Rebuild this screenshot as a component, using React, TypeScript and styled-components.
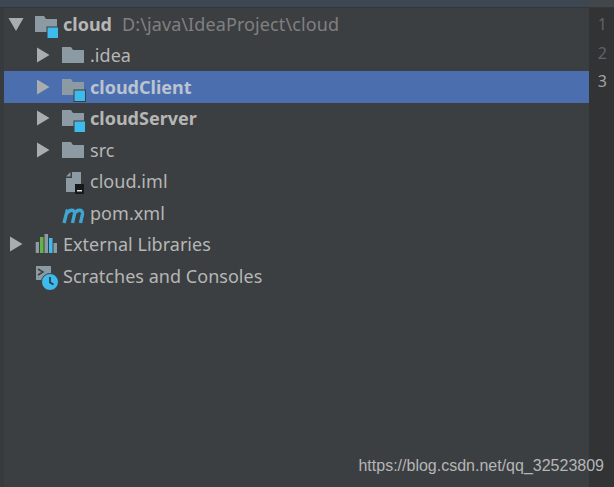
import styled, { createGlobalStyle } from 'styled-components';

const GlobalStyle = createGlobalStyle`
  html, body { margin: 0; padding: 0; background: #3c3f41; overflow: hidden; }
`;

const Window = styled.div`
  position: relative;
  display: flex;
  flex-direction: column;
  width: 614px;
  height: 487px;
  background: #3c3f41;
  font-family: "Noto Sans", sans-serif;
  overflow: hidden;
`;

const TopBar = styled.div`
  display: flex;
  flex: 0 0 7px;
  background: #3d4752;
  border-bottom: 1px solid #33363a;
  box-sizing: content-box;
`;

const TopBarFill = styled.div`
  flex: 1;
`;

const TopBarGutter = styled.div`
  flex: 0 0 25px;
  background: #44474a;
`;

const Body = styled.div`
  display: flex;
  flex: 1;
  min-height: 0;
`;

const LeftEdge = styled.div`
  flex: 0 0 4px;
  background: #383b3d;
`;

const Tree = styled.div`
  flex: 1;
`;

const Row = styled.div<{ $depth: number; $selected?: boolean }>`
  display: flex;
  align-items: center;
  height: 31.5px;
  padding-left: ${(p) => p.$depth * 27}px;
  background: ${(p) => (p.$selected ? '#4b6eaf' : 'transparent')};
`;

const ArrowSlot = styled.div`
  display: flex;
  justify-content: center;
  flex: 0 0 23px;
  margin-right: 7px;
`;

const IconSlot = styled.div`
  display: flex;
  flex: 0 0 26px;
  margin-right: 3px;
`;

const Label = styled.span<{ $bold?: boolean; $selected?: boolean }>`
  font-size: 18px;
  line-height: 24px;
  white-space: nowrap;
  letter-spacing: ${(p) => (p.$bold ? 0 : 0.03)}px;
  font-weight: ${(p) => (p.$bold ? 700 : 400)};
  color: ${(p) => (p.$selected ? '#bcc3d0' : '#b6b6b6')};
`;

const Hint = styled.span`
  margin-left: 10px;
  font-size: 18px;
  line-height: 24px;
  letter-spacing: 0.1px;
  white-space: nowrap;
  color: #808080;
`;

const Gutter = styled.div`
  display: flex;
  flex-direction: column;
  flex: 0 0 25px;
  padding-top: 2px;
  background: #313335;
`;

const LineNo = styled.div<{ $current?: boolean }>`
  height: 28.5px;
  padding-right: 7px;
  text-align: right;
  font-size: 16px;
  line-height: 28px;
  color: ${(p) => (p.$current ? '#a4a3a3' : '#606366')};
`;

const Watermark = styled.div`
  position: absolute;
  right: 10px;
  bottom: 11px;
  font-family: "Liberation Sans", sans-serif;
  font-size: 16px;
  line-height: 20px;
  color: #b4b6b8;
`;

const Arrow = ({ open }: { open?: boolean }) => (
  <svg width="16" height="16" viewBox="0 0 16 16">
    <path d={open ? 'M0.5 2h15L8 15z' : 'M2 0.5l12.5 7.5L2 15.5z'} fill="#a9adb0" />
  </svg>
);

const Folder = ({ module }: { module?: boolean }) => (
  <svg width="26" height="26" viewBox="0 0 26 26" overflow="visible">
    <path d="M1 5h9l2 3h11v13H1z" fill="#8c9aa3" />
    {module && <rect x="13" y="16" width="11.5" height="11.5" fill="#3dbbed" stroke="#3c3f41" />}
  </svg>
);

const ImlFile = () => (
  <svg width="26" height="26" viewBox="0 0 26 26">
    <path d="M11 4h9v20H5V10h6zM5 8.5L9.500 4v4.500z" fill="#8c9aa3" />
    <rect x="14" y="16" width="9" height="10" fill="#17181a" />
    <rect x="16" y="22" width="5" height="1.500" fill="#e0e0e0" />
  </svg>
);

const MavenIcon = () => (
  <svg width="26" height="22" viewBox="0 0 26 22">
    <path
      d="M3 21L6.500 7.500M6 11.500c2-4 8-5 7.500 .5l-2 9M13.500 11.500c2-4 8.500-5 8 .5l-2 9"
      fill="none"
      stroke="#3fa6d3"
      strokeWidth="3.400"
    />
  </svg>
);

const LibrariesIcon = () => (
  <svg width="26" height="22" viewBox="0 0 26 22">
    <rect x="1.700" y="9" width="3.300" height="11" fill="#8c9aa3" />
    <rect x="6" y="4" width="3.500" height="16" fill="#62b543" />
    <rect x="10.500" y="1" width="3.500" height="19" fill="#8c9aa3" />
    <rect x="15" y="5" width="3.500" height="15" fill="#3dbbed" />
    <rect x="19.500" y="10" width="3.500" height="10" fill="#8c9aa3" />
  </svg>
);

const ScratchIcon = () => (
  <svg width="26" height="28" viewBox="0 0 26 28">
    <rect x="2" y="4" width="15" height="14" fill="#8c9aa3" />
    <path d="M4 7l5 3-5 3" fill="none" stroke="#3c3f41" strokeWidth="1.500" />
    <circle cx="16" cy="20" r="8.500" fill="#3dbbed" stroke="#3c3f41" />
    <path d="M16 15v5.500l3.500 2" fill="none" stroke="#26343d" strokeWidth="1.600" />
  </svg>
);

export default function App() {
  return (
    <Window>
      <GlobalStyle />
      <TopBar>
        <TopBarFill />
        <TopBarGutter />
      </TopBar>
      <Body>
        <LeftEdge />
        <Tree>
          <Row $depth={0}>
            <ArrowSlot><Arrow open /></ArrowSlot>
            <IconSlot><Folder module /></IconSlot>
            <Label $bold>cloud</Label>
            <Hint>D:\java\IdeaProject\cloud</Hint>
          </Row>
          <Row $depth={1}>
            <ArrowSlot><Arrow /></ArrowSlot>
            <IconSlot><Folder /></IconSlot>
            <Label>.idea</Label>
          </Row>
          <Row $depth={1} $selected>
            <ArrowSlot><Arrow /></ArrowSlot>
            <IconSlot><Folder module /></IconSlot>
            <Label $bold $selected>cloudClient</Label>
          </Row>
          <Row $depth={1}>
            <ArrowSlot><Arrow /></ArrowSlot>
            <IconSlot><Folder module /></IconSlot>
            <Label $bold>cloudServer</Label>
          </Row>
          <Row $depth={1}>
            <ArrowSlot><Arrow /></ArrowSlot>
            <IconSlot><Folder /></IconSlot>
            <Label>src</Label>
          </Row>
          <Row $depth={1}>
            <ArrowSlot />
            <IconSlot><ImlFile /></IconSlot>
            <Label>cloud.iml</Label>
          </Row>
          <Row $depth={1}>
            <ArrowSlot />
            <IconSlot><MavenIcon /></IconSlot>
            <Label>pom.xml</Label>
          </Row>
          <Row $depth={0}>
            <ArrowSlot><Arrow /></ArrowSlot>
            <IconSlot><LibrariesIcon /></IconSlot>
            <Label>External Libraries</Label>
          </Row>
          <Row $depth={0}>
            <ArrowSlot />
            <IconSlot><ScratchIcon /></IconSlot>
            <Label>Scratches and Consoles</Label>
          </Row>
        </Tree>
        <Gutter>
          <LineNo>1</LineNo>
          <LineNo>2</LineNo>
          <LineNo $current>3</LineNo>
        </Gutter>
      </Body>
      <Watermark>https://blog.csdn.net/qq_32523809</Watermark>
    </Window>
  );
}
